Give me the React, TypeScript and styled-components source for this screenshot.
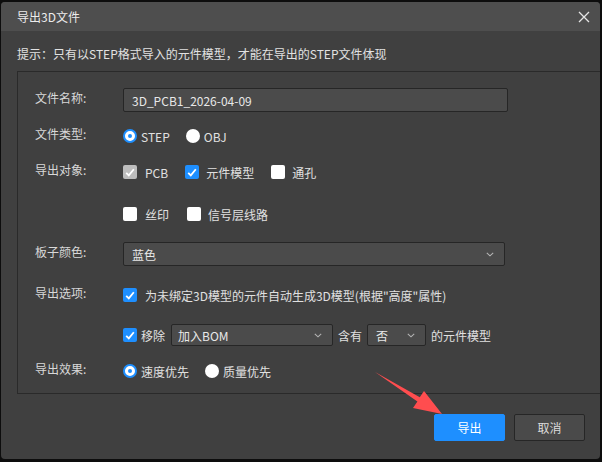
import React from 'react'
import styled, { createGlobalStyle } from 'styled-components'

const GlobalStyle = createGlobalStyle`
  html, body {
    margin: 0;
    background: #0d0d0d;
  }
  body {
    font-family: "Noto Sans CJK SC", "Noto Sans", sans-serif;
    font-size: 12px;
    color: #dedede;
  }
`

const Screen = styled.div`
  position: relative;
  width: 602px;
  height: 462px;
  overflow: hidden;
`

const Dialog = styled.div`
  margin: 2px 0 0 1px;
  width: 599px;
  height: 457px;
  background: #404040;
  border-radius: 4px;
  display: flex;
  flex-direction: column;
  overflow: hidden;
`

const TitleBar = styled.div`
  height: 29px;
  background: #4e4e4e;
  display: flex;
  align-items: center;
  justify-content: space-between;
  padding: 0 9px 0 16px;
  color: #ececec;
  font-size: 12px;
`

const CloseButton = styled.button`
  border: 0;
  background: none;
  padding: 0;
  width: 14px;
  height: 14px;
  display: flex;
  align-items: center;
  justify-content: center;
  cursor: pointer;
`

const Body = styled.div`
  padding: 0 14px 0 16px;
  display: flex;
  flex-direction: column;
`

const Hint = styled.div`
  margin-top: 14px;
  height: 18px;
  line-height: 18px;
  color: #e2e2e2;
`

const Panel = styled.div`
  margin-top: 8px;
  width: 567px;
  height: 321px;
  border: 1px solid #2a2a2a;
  padding-left: 17px;
  box-sizing: content-box;
  display: flex;
  flex-direction: column;
`

const FormRow = styled.div<{ $top: number }>`
  margin-top: ${p => p.$top}px;
  height: 24px;
  display: flex;
  align-items: center;
`

const Label = styled.div`
  width: 88px;
  flex-shrink: 0;
  align-self: flex-start;
  line-height: 20px;
  color: #d8d8d8;
`

const Field = styled.div`
  display: flex;
  align-items: center;
`

const TextInput = styled.input`
  box-sizing: border-box;
  width: 385px;
  height: 24px;
  padding: 0 8px;
  background: #4b4b4b;
  border: 1px solid #262626;
  border-radius: 2px;
  color: #e8e8e8;
  font: inherit;
  outline: none;
`

const Select = styled.div<{ $width: number; $height: number; $pad: number }>`
  box-sizing: border-box;
  width: ${p => p.$width}px;
  height: ${p => p.$height}px;
  padding: 0 10px 0 ${p => p.$pad}px;
  background: #4b4b4b;
  border: 1px solid #262626;
  border-radius: 2px;
  display: flex;
  align-items: center;
  justify-content: space-between;
  color: #e8e8e8;
`

const Option = styled.label<{ $gap: number; $space: number }>`
  display: flex;
  align-items: center;
  gap: ${p => p.$gap}px;
  margin-right: ${p => p.$space}px;
  color: #e0e0e0;
  white-space: nowrap;
`

const Box = styled.span<{ $state: 'on' | 'off' | 'disabled' }>`
  width: 14px;
  height: 14px;
  border-radius: 2px;
  display: flex;
  align-items: center;
  justify-content: center;
  background: ${p =>
    p.$state === 'on' ? '#1e8fff' : p.$state === 'disabled' ? '#bdbdbd' : '#ffffff'};
`

const Radio = styled.span<{ $on?: boolean }>`
  box-sizing: border-box;
  width: 14px;
  height: 14px;
  border-radius: 50%;
  background: #ffffff;
  border: ${p => (p.$on ? '2px solid #1e8fff' : 'none')};
  display: flex;
  align-items: center;
  justify-content: center;
  &::after {
    content: '';
    display: ${p => (p.$on ? 'block' : 'none')};
    width: 4px;
    height: 4px;
    border-radius: 50%;
    background: #1e8fff;
  }
`

const Plain = styled.span<{ $side: number }>`
  margin: 0 ${p => p.$side}px;
  color: #e0e0e0;
`

const Footer = styled.div`
  margin-top: 20px;
  display: flex;
  justify-content: flex-end;
  gap: 9px;
  padding-right: 1px;
`

const Button = styled.button<{ $primary?: boolean }>`
  box-sizing: border-box;
  width: 71px;
  height: 27px;
  border-radius: 2px;
  border: 1px solid ${p => (p.$primary ? '#1e8fff' : '#262626')};
  background: ${p => (p.$primary ? '#1e8fff' : '#4a4a4a')};
  color: ${p => (p.$primary ? '#ffffff' : '#dcdcdc')};
  font: inherit;
  cursor: pointer;
`

const Pointer = styled.svg`
  position: absolute;
  left: 0;
  top: 0;
  pointer-events: none;
`

const Check = () => (
  <svg width="10" height="9" viewBox="0 0 10 9">
    <polyline points="1.2,4.8 3.8,7.4 8.8,1.2" fill="none" stroke="#fff" strokeWidth="1.8" />
  </svg>
)

const Chevron = () => (
  <svg width="8" height="5" viewBox="0 0 8 5">
    <polyline points="0.8,0.8 4,3.8 7.2,0.8" fill="none" stroke="#b4b4b4" strokeWidth="1.1" />
  </svg>
)

type CheckProps = { state: 'on' | 'off' | 'disabled'; text: string; space?: number; gap?: number }

const CheckOption = ({ state, text, space = 17, gap = 8 }: CheckProps) => (
  <Option $gap={gap} $space={space}>
    <Box $state={state}>{state !== 'off' && <Check />}</Box>
    {text}
  </Option>
)

const RadioOption = ({ on, text, space = 16 }: { on?: boolean; text: string; space?: number }) => (
  <Option $gap={4} $space={space}>
    <Radio $on={on} />
    {text}
  </Option>
)

export default function App() {
  return (
    <Screen>
      <GlobalStyle />
      <Dialog>
        <TitleBar>
          <span>导出3D文件</span>
          <CloseButton aria-label="关闭">
            <svg width="12" height="12" viewBox="0 0 12 12">
              <path d="M1 1L11 11M11 1L1 11" stroke="#e6e6e6" strokeWidth="1.3" />
            </svg>
          </CloseButton>
        </TitleBar>

        <Body>
          <Hint>提示：只有以STEP格式导入的元件模型，才能在导出的STEP文件体现</Hint>

          <Panel>
            <FormRow $top={16}>
              <Label>文件名称:</Label>
              <TextInput defaultValue="3D_PCB1_2026-04-09" />
            </FormRow>

            <FormRow $top={12}>
              <Label>文件类型:</Label>
              <Field>
                <RadioOption on text="STEP" />
                <RadioOption text="OBJ" />
              </Field>
            </FormRow>

            <FormRow $top={12}>
              <Label>导出对象:</Label>
              <Field>
                <CheckOption state="disabled" text="PCB" />
                <CheckOption state="on" text="元件模型" gap={7} />
                <CheckOption state="off" text="通孔" gap={7} />
              </Field>
            </FormRow>

            <FormRow $top={18}>
              <Label />
              <Field>
                <CheckOption state="off" text="丝印" space={18} />
                <CheckOption state="off" text="信号层线路" gap={7} />
              </Field>
            </FormRow>

            <FormRow $top={16}>
              <Label>板子颜色:</Label>
              <Select $width={382} $height={24} $pad={8}>
                <span>蓝色</span>
                <Chevron />
              </Select>
            </FormRow>

            <FormRow $top={17}>
              <Label>导出选项:</Label>
              <CheckOption state="on" text={'为未绑定3D模型的元件自动生成3D模型(根据"高度"属性)'} />
            </FormRow>

            <FormRow $top={16}>
              <Label />
              <Field>
                <CheckOption state="on" text="移除" gap={4} space={6} />
                <Select $width={162} $height={22} $pad={6}>
                  <span>加入BOM</span>
                  <Chevron />
                </Select>
                <Plain $side={5}>含有</Plain>
                <Select $width={59} $height={22} $pad={8}>
                  <span>否</span>
                  <Chevron />
                </Select>
                <Plain $side={5}>的元件模型</Plain>
              </Field>
            </FormRow>

            <FormRow $top={12}>
              <Label>导出效果:</Label>
              <Field>
                <RadioOption on text="速度优先" />
                <RadioOption text="质量优先" />
              </Field>
            </FormRow>
          </Panel>

          <Footer>
            <Button $primary>导出</Button>
            <Button>取消</Button>
          </Footer>
        </Body>
      </Dialog>

      <Pointer width="602" height="462" viewBox="0 0 602 462">
        <polygon
          points="375,372 419.8,397.2 424,391 442,414 413,408 417.4,401.4"
          fill="#ff4d4f"
        />
      </Pointer>
    </Screen>
  )
}
